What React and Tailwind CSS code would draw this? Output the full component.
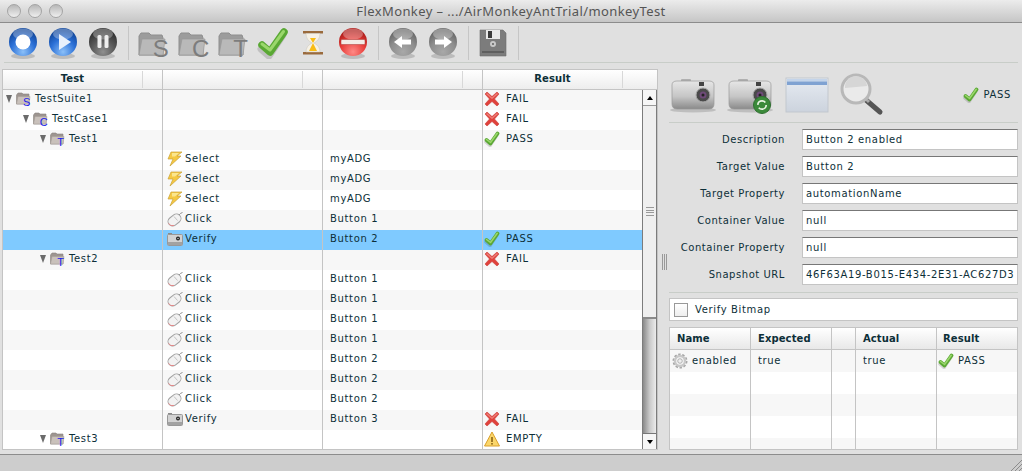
import React from "react";

// Round glossy toolbar button
function Orb({ id, light, mid, dark, children }) {
  return (
    <svg width="32" height="34" viewBox="0 0 32 34">
      <defs>
        <radialGradient id={id} cx="50%" cy="85%" r="75%">
          <stop offset="0%" stopColor={light} />
          <stop offset="60%" stopColor={mid} />
          <stop offset="100%" stopColor={dark} />
        </radialGradient>
      </defs>
      <ellipse cx="16" cy="30" rx="12" ry="3" fill="#000" opacity="0.16" />
      <circle cx="16" cy="16" r="14" fill={`url(#${id})`} />
      <ellipse cx="16" cy="8" rx="10" ry="5.5" fill="#fff" opacity="0.3" />
      {children}
    </svg>
  );
}

function BigFolder({ letter }) {
  return (
    <svg width="34" height="38" viewBox="-1 -4 34 38">
      <path d="M2 8 L4 5 H12 L14 7 H25 L26 10 V27 H2 Z" fill="#9c9c9c" stroke="#8e8e8e" />
      <path d="M2 27 L5 11 H28 L26 27 Z" fill="#b9b9b9" stroke="#9a9a9a" strokeWidth="0.7" />
      <text x="24" y="28.5" textAnchor="middle" fontSize="24" fontFamily="'Liberation Sans', sans-serif" fill="#7d7d7d">{letter}</text>
    </svg>
  );
}

function Check({ size = 16 }) {
  return (
    <svg width={size} height={size} viewBox="0 0 32 32">
      <path d="M5 20 L13 27 L27 6" fill="none" stroke="#000" strokeOpacity="0.14" strokeWidth="7" strokeLinecap="round" strokeLinejoin="round" transform="translate(-1 2)" />
      <path d="M5 18 L13 25 L27 5" fill="none" stroke="#5aa834" strokeWidth="7.5" strokeLinecap="round" strokeLinejoin="round" />
      <path d="M5 17 L13 23 L26.5 4.5" fill="none" stroke="#9bd76c" strokeWidth="3" strokeLinecap="round" strokeLinejoin="round" />
    </svg>
  );
}

function Cross() {
  return (
    <svg width="16" height="16" viewBox="0 0 16 16">
      <path d="M1 3 L3 1 L8 5.5 L13 1 L15 3 L10.5 8 L15 13 L13 15 L8 10.5 L3 15 L1 13 L5.5 8 Z" fill="#e0423c" stroke="#c9403a" strokeWidth="0.6" />
      <path d="M3 2 L8 6.5 L13 2 L14 3 L8 8 L2 3 Z" fill="#f59a94" opacity="0.7" />
    </svg>
  );
}

function Warn() {
  return (
    <svg width="16" height="16" viewBox="0 0 16 16">
      <path d="M8 1 L15.5 15 H0.5 Z" fill="#fbd66a" stroke="#d9a02c" />
      <rect x="7.2" y="6" width="1.6" height="5" fill="#8a6414" />
      <rect x="7.2" y="12" width="1.6" height="1.6" fill="#8a6414" />
    </svg>
  );
}

function Bolt() {
  return (
    <svg width="16" height="16" viewBox="0 0 16 16">
      <path d="M4 1 H15 L10 5 H14 L3 15 L6 8 H1 Z" fill="#f5c843" stroke="#c9a23a" strokeWidth="0.7" />
      <path d="M5 2 H12 L8 5.5 H5 Z" fill="#fbe68d" />
    </svg>
  );
}

function Mouse() {
  return (
    <svg width="16" height="16" viewBox="0 0 16 16">
      <path d="M12 4 Q13.5 2 15.5 1.5" stroke="#8f8f8f" fill="none" />
      <rect x="0.5" y="4.5" width="14" height="9" rx="4.5" transform="rotate(-38 7.5 9)" fill="#f2f2f2" stroke="#a2a2a2" />
      <path d="M1.5 12.5 Q3.5 15.5 7 14.5" stroke="#e58a8a" fill="none" />
      <path d="M7 5.5 L10.5 9.5" stroke="#b5b5b5" strokeWidth="0.8" />
    </svg>
  );
}

function MiniCamera() {
  return (
    <svg width="16" height="16" viewBox="0 0 16 16">
      <rect x="1" y="2" width="4" height="2" fill="#8a8a8a" />
      <rect x="0.5" y="3.5" width="15" height="11" rx="1" fill="#d2d2d2" stroke="#989898" />
      <rect x="1" y="11" width="14" height="3" fill="#a2a2a2" />
      <circle cx="11" cy="7.5" r="2" fill="#222" />
      <circle cx="11" cy="7.5" r="0.7" fill="#ddd" />
    </svg>
  );
}

function TreeFolder({ letter }) {
  return (
    <svg width="17" height="18" viewBox="0 0 17 18">
      <path d="M0.5 5 L2 3 H6 L7 4 H13 V14 H0.5 Z" fill="#9d9590" stroke="#8c8480" strokeWidth="0.6" />
      <path d="M0.5 14 L2 6.5 H14 L13 14 Z" fill="#c9c1bb" stroke="#a39b95" strokeWidth="0.5" />
      <text x="11" y="16" textAnchor="middle" fontSize="11" fontFamily="'Liberation Sans', sans-serif" fill="#2222ee">{letter}</text>
    </svg>
  );
}

function Gear() {
  return (
    <svg width="16" height="16" viewBox="0 0 16 16">
      <circle cx="8" cy="8" r="6" fill="none" stroke="#a5a5a5" strokeWidth="3" strokeDasharray="2.2 1.5" />
      <circle cx="8" cy="8" r="5" fill="none" stroke="#c8c8c8" strokeWidth="2.4" />
      <circle cx="8" cy="8" r="2.3" fill="#eee" stroke="#999" strokeWidth="0.7" />
    </svg>
  );
}

function BigCamera({ badge }) {
  return (
    <svg width="48" height="42" viewBox="0 0 48 42">
      <defs>
        <linearGradient id="camBody" x1="0" y1="0" x2="0" y2="1">
          <stop offset="0%" stopColor="#e6e6e6" />
          <stop offset="55%" stopColor="#c6c6c6" />
          <stop offset="100%" stopColor="#8a8a8a" />
        </linearGradient>
      </defs>
      <ellipse cx="24" cy="36" rx="23" ry="2.5" fill="#000" opacity="0.15" />
      <rect x="12" y="5" width="10" height="4" rx="1" fill="#b0b0b0" />
      <path d="M3 11 Q3 7 8 7 H40 Q45 7 45 11 V30 Q45 35 40 35 H8 Q3 35 3 30 Z" fill="url(#camBody)" stroke="#999" strokeWidth="0.7" />
      <rect x="30" y="8" width="5" height="4" fill="#444" />
      <circle cx="34" cy="21" r="7" fill="#4a4a4a" stroke="#aaa" />
      <circle cx="34" cy="21" r="3.5" fill="#6e4a78" />
      <circle cx="34" cy="21" r="1.5" fill="#222" />
      {badge && (
        <g>
          <circle cx="36" cy="31" r="8.5" fill="#3b8a3a" stroke="#2f6f30" />
          <circle cx="36" cy="31" r="4.2" fill="none" stroke="#e9f4e3" strokeWidth="1.7" strokeDasharray="10 3" />
        </g>
      )}
    </svg>
  );
}

function WindowIcon() {
  return (
    <svg width="44" height="38" viewBox="0 0 44 38">
      <defs>
        <linearGradient id="winBody" x1="0" y1="0" x2="0" y2="1">
          <stop offset="0%" stopColor="#e6ebf2" />
          <stop offset="100%" stopColor="#ccd3dd" />
        </linearGradient>
      </defs>
      <rect x="1" y="2" width="42" height="34" fill="url(#winBody)" stroke="#c2c7ce" />
      <rect x="2" y="3" width="40" height="2.5" fill="#c3d4ea" />
      <rect x="2" y="5.5" width="40" height="3.5" fill="#7fa2d2" />
    </svg>
  );
}

function Magnifier() {
  return (
    <svg width="44" height="44" viewBox="0 0 44 44">
      <path d="M26 27 L40 39" stroke="#555" strokeWidth="5" strokeLinecap="round" />
      <path d="M24 24 L29 29" stroke="#aaa" strokeWidth="3" />
      <circle cx="16" cy="16" r="14" fill="#eaeaea" stroke="#b8b8b8" strokeWidth="3" />
      <path d="M5 15 A11 11 0 0 1 27 13 Z" fill="#d6d6d6" />
    </svg>
  );
}

function ToolSlot({ children }) {
  return <div className="w-[40px] h-[38px] flex items-center justify-center">{children}</div>;
}

function ToolSep() {
  return <div className="w-px h-[34px] bg-[#c6c6c6] ml-[5px] mr-[4px]" />;
}

function Toolbar() {
  return (
    <div className="h-[40px] shrink-0 flex items-center mx-[4px] border-b border-[#c8cdc8]">
      <div className="w-[39px] h-[38px] pr-px flex items-center justify-center">
        <Orb id="orbBlue1" light="#8cc0f8" mid="#2a6fd6" dark="#144a9e">
          <circle cx="16" cy="16" r="7.5" fill="#fff" />
        </Orb>
      </div>
      <ToolSlot>
        <Orb id="orbBlue2" light="#8cc0f8" mid="#2a6fd6" dark="#144a9e">
          <path d="M12 8 L24 16 L12 24 Z" fill="#e8f0fb" />
        </Orb>
      </ToolSlot>
      <ToolSlot>
        <Orb id="orbGrey1" light="#8f8f8f" mid="#555" dark="#333">
          <rect x="10.5" y="9" width="4" height="13" rx="1.5" fill="#eee" />
          <rect x="17.5" y="9" width="4" height="13" rx="1.5" fill="#eee" />
        </Orb>
      </ToolSlot>
      <ToolSep />
      <ToolSlot><BigFolder letter="S" /></ToolSlot>
      <ToolSlot><BigFolder letter="C" /></ToolSlot>
      <ToolSlot><BigFolder letter="T" /></ToolSlot>
      <ToolSlot><Check size={32} /></ToolSlot>
      <ToolSlot>
        <svg width="22" height="26" viewBox="0 0 22 26">
          <rect x="1" y="1" width="20" height="2.5" fill="#9a6a3c" />
          <rect x="1" y="22" width="20" height="2.5" fill="#9a6a3c" />
          <path d="M4 3.5 H18 Q18 10 12 13 Q18 16 18 22 H4 Q4 16 10 13 Q4 10 4 3.5 Z" fill="#f6f1e6" stroke="#c9c4b8" strokeWidth="0.5" />
          <path d="M8 8 H14 L11 13 L15 21 H7 L11 13 Z" fill="#f8bc16" />
        </svg>
      </ToolSlot>
      <ToolSlot>
        <Orb id="orbRed" light="#ff8a86" mid="#e73c38" dark="#b01f1c">
          <rect x="4" y="13.5" width="24" height="5" rx="1" fill="#f3ece6" stroke="#a83a36" strokeWidth="0.5" />
        </Orb>
      </ToolSlot>
      <ToolSep />
      <ToolSlot>
        <Orb id="orbGrey2" light="#a8a8a8" mid="#8e8e8e" dark="#6a6a6a">
          <path d="M7 16 L15 10 V13.5 H24 V18.5 H15 V22 Z" fill="#fff" />
        </Orb>
      </ToolSlot>
      <ToolSlot>
        <Orb id="orbGrey3" light="#a8a8a8" mid="#8e8e8e" dark="#6a6a6a">
          <path d="M25 16 L17 10 V13.5 H8 V18.5 H17 V22 Z" fill="#fff" />
        </Orb>
      </ToolSlot>
      <ToolSep />
      <ToolSlot>
        <svg width="28" height="30" viewBox="0 0 28 30">
          <path d="M1 2 H24 L27 5 V28 H1 Z" fill="#7c7c7c" stroke="#6c6c6c" strokeWidth="0.6" />
          <rect x="7" y="2" width="14" height="9" fill="#e8e8e8" />
          <rect x="9" y="3" width="4" height="7" fill="#3a3a3a" />
          <circle cx="14" cy="16" r="3" fill="#c9c9c9" />
          <circle cx="14" cy="16" r="0.9" fill="#555" />
          <rect x="3" y="23" width="22" height="2" fill="#5f5f5f" />
        </svg>
      </ToolSlot>
      <ToolSep />
    </div>
  );
}

const treeRows = [
  { level: 0, folder: "S", name: "TestSuite1", result: "FAIL" },
  { level: 1, folder: "C", name: "TestCase1", result: "FAIL" },
  { level: 2, folder: "T", name: "Test1", result: "PASS" },
  { action: "Select", target: "myADG" },
  { action: "Select", target: "myADG" },
  { action: "Select", target: "myADG" },
  { action: "Click", target: "Button 1" },
  { action: "Verify", target: "Button 2", result: "PASS", selected: true },
  { level: 2, folder: "T", name: "Test2", result: "FAIL" },
  { action: "Click", target: "Button 1" },
  { action: "Click", target: "Button 1" },
  { action: "Click", target: "Button 1" },
  { action: "Click", target: "Button 1" },
  { action: "Click", target: "Button 2" },
  { action: "Click", target: "Button 2" },
  { action: "Click", target: "Button 2" },
  { action: "Verify", target: "Button 3", result: "FAIL" },
  { level: 2, folder: "T", name: "Test3", result: "EMPTY" },
];

function ActionIcon({ name }) {
  if (name === "Select") return <Bolt />;
  if (name === "Click") return <Mouse />;
  return <MiniCamera />;
}

function ResultIcon({ name }) {
  if (name === "PASS") return <Check />;
  if (name === "FAIL") return <Cross />;
  return <Warn />;
}

function TreeTable() {
  return (
    <div className="w-[656px] h-[381px] border border-[#c4c4c4] bg-white flex flex-col shrink-0 overflow-hidden">
      <div className="h-[20px] shrink-0 flex bg-gradient-to-b from-white to-[#ededed] border-b border-[#c4c4c4] font-bold tracking-[0.1px]">
        <div className="w-[160px] border-r border-[#c4c4c4] flex">
          <div className="w-[140px] border-r border-[#d8d8d8] my-[1px] pb-[2px] flex items-center justify-center">Test</div>
        </div>
        <div className="w-[160px] border-r border-[#c4c4c4] flex">
          <div className="w-[140px] border-r border-[#d8d8d8] my-[1px]" />
        </div>
        <div className="w-[160px] border-r border-[#c4c4c4] flex">
          <div className="w-[140px] border-r border-[#d8d8d8] my-[1px]" />
        </div>
        <div className="w-[140px] border-r border-[#d8d8d8] my-[1px] pb-[2px] flex items-center justify-center">Result</div>
      </div>
      <div className="flex flex-1 min-h-0">
        <div className="w-[639px] shrink-0">
          {treeRows.map((row, i) => {
            let bg = i % 2 === 0 ? "bg-[#f7f7f7]" : "bg-white";
            if (row.selected) bg = "bg-[#7fcaff]";
            return (
              <div key={i} className={`h-[20px] flex ${bg}`}>
                <div className="w-[160px] border-r border-[#c4c4c4] pb-[2px] flex items-center">
                  {row.name && (
                    <div
                      className="flex items-center"
                      style={{ paddingLeft: 3 + row.level * 17 }}
                    >
                      <div className="w-0 h-0 border-l-[3.5px] border-r-[3.5px] border-t-[8px] border-l-transparent border-r-transparent border-t-[#6b6b6b] mr-[4px]" />
                      <TreeFolder letter={row.folder} />
                      <span className="ml-[2px]">{row.name}</span>
                    </div>
                  )}
                </div>
                <div className="w-[160px] border-r border-[#c4c4c4] pb-[2px] flex items-center pl-[4px]">
                  {row.action && (
                    <>
                      <ActionIcon name={row.action} />
                      <span className="ml-[2px]">{row.action}</span>
                    </>
                  )}
                </div>
                <div className="w-[160px] border-r border-[#c4c4c4] pb-[2px] flex items-center pl-[7px]">
                  {row.target}
                </div>
                <div className="flex-1 pb-[2px] flex items-center pl-[1px]">
                  {row.result && (
                    <>
                      <ResultIcon name={row.result} />
                      <span className="ml-[6px]">{row.result}</span>
                    </>
                  )}
                </div>
              </div>
            );
          })}
        </div>
        <div className="w-[15px] shrink-0 flex flex-col border-x border-[#7c7c7c]">
          <div className="h-[16px] shrink-0 bg-[#f6f6f6] border-b border-[#999] flex items-center justify-center">
            <div className="w-0 h-0 border-l-[3.5px] border-r-[3.5px] border-b-[4px] border-l-transparent border-r-transparent border-b-black" />
          </div>
          <div className="h-[213px] shrink-0 bg-[#efefef] border-b-2 border-[#8a8a8a] flex items-center justify-center">
            <div className="w-[8px] h-[9px] flex flex-col justify-between">
              <div className="h-px bg-[#999]" />
              <div className="h-px bg-[#999]" />
              <div className="h-px bg-[#999]" />
              <div className="h-px bg-[#999]" />
            </div>
          </div>
          <div className="flex-1 bg-gradient-to-r from-[#8a8a8a] via-[#c8c8c8] to-[#ececec]" />
          <div className="h-[16px] shrink-0 bg-[#f6f6f6] border-t border-[#777] flex items-center justify-center">
            <div className="w-0 h-0 border-l-[3.5px] border-r-[3.5px] border-t-[4px] border-l-transparent border-r-transparent border-t-black" />
          </div>
        </div>
      </div>
    </div>
  );
}

const fields = [
  ["Description", "Button 2 enabled"],
  ["Target Value", "Button 2"],
  ["Target Property", "automationName"],
  ["Container Value", "null"],
  ["Container Property", "null"],
  ["Snapshot URL", "46F63A19-B015-E434-2E31-AC627D3"],
];

function DetailPanel() {
  return (
    <div className="w-[350px] shrink-0 pl-px">
      <div className="h-[54px] flex items-center border-b border-[#c8cdc8] pb-[2px]">
        <BigCamera />
        <div className="ml-[9px]"><BigCamera badge /></div>
        <div className="ml-[11px]"><WindowIcon /></div>
        <div className="ml-[11px]"><Magnifier /></div>
        <div className="ml-auto flex items-center mr-[7px]">
          <Check />
          <span className="ml-[4px]">PASS</span>
        </div>
      </div>
      <div className="pt-[6px] flex flex-col gap-[6px] h-[170px] border-b border-[#c8cdc8]">
        {fields.map(([label, value]) => (
          <div key={label} className="h-[21px] flex items-center">
            <div className="w-[116px] text-right shrink-0 tracking-[0.55px]">{label}</div>
            <div className="ml-[17px] w-[216px] h-[21px] bg-white border border-[#c4c4c4] border-t-[#777] flex items-center pl-[3px] overflow-hidden whitespace-nowrap">
              {value}
            </div>
          </div>
        ))}
      </div>
      <div className="mt-[5px] h-[23px] border border-[#c4c4c4] bg-white flex items-center pl-[4px]">
        <div className="w-[14px] h-[14px] border border-[#999] bg-gradient-to-b from-white to-[#eee]" />
        <span className="ml-[7px]">Verify Bitmap</span>
      </div>
      <div className="mt-[6px] h-[123px] border border-[#c4c4c4] bg-white flex flex-col overflow-hidden">
        <div className="h-[22px] shrink-0 flex font-bold tracking-[0.1px] bg-gradient-to-b from-white to-[#e8e8e8] border-b border-[#c4c4c4]">
          <div className="w-[81px] border-r border-[#c4c4c4] pl-[7px] flex items-center">Name</div>
          <div className="w-[81px] border-r border-[#c4c4c4] pl-[7px] flex items-center">Expected</div>
          <div className="w-[24px] border-r border-[#c4c4c4]" />
          <div className="w-[81px] border-r border-[#c4c4c4] pl-[7px] flex items-center">Actual</div>
          <div className="flex-1 pl-[6px] flex items-center">Result</div>
        </div>
        {[0, 1, 2, 3, 4].map((i) => (
          <div key={i} className={`h-[22px] shrink-0 flex ${i % 2 === 0 ? "bg-[#f7f7f7]" : "bg-white"}`}>
            <div className="w-[81px] border-r border-[#c4c4c4] pl-[2px] flex items-center">
              {i === 0 && (
                <>
                  <Gear />
                  <span className="ml-[4px]">enabled</span>
                </>
              )}
            </div>
            <div className="w-[81px] border-r border-[#c4c4c4] pl-[7px] flex items-center">{i === 0 && "true"}</div>
            <div className="w-[24px] border-r border-[#c4c4c4]" />
            <div className="w-[81px] border-r border-[#c4c4c4] pl-[7px] flex items-center">{i === 0 && "true"}</div>
            <div className="flex-1 pl-[1px] flex items-center">
              {i === 0 && (
                <>
                  <Check />
                  <span className="ml-[4px]">PASS</span>
                </>
              )}
            </div>
          </div>
        ))}
      </div>
    </div>
  );
}

function App() {
  return (
    <div className="w-[1022px] h-[471px] overflow-hidden bg-[#e0e0e0] flex flex-col text-[10px] leading-none tracking-[0.65px] text-[#0d2f38] font-['DejaVu_Sans',sans-serif]">
      {/* title bar */}
      <div className="h-[23px] shrink-0 grid grid-cols-[1fr_auto_1fr] items-center bg-gradient-to-b from-[#ececec] to-[#c6c6c6] border-b border-[#8c8c8c]">
        <div className="flex gap-[7px] pl-[7px]">
          <div className="w-[14px] h-[14px] rounded-full border border-[#a4a4a4] bg-gradient-to-b from-[#b8b8b8] to-[#efefef]" />
          <div className="w-[14px] h-[14px] rounded-full border border-[#a4a4a4] bg-gradient-to-b from-[#b8b8b8] to-[#efefef]" />
          <div className="w-[14px] h-[14px] rounded-full border border-[#a4a4a4] bg-gradient-to-b from-[#b8b8b8] to-[#efefef]" />
        </div>
        <div className="text-[13px] text-[#555] font-['Noto_Sans',sans-serif] tracking-[0.4px]">
          FlexMonkey – .../AirMonkeyAntTrial/monkeyTest
        </div>
        <div />
      </div>
      <Toolbar />
      {/* main area */}
      <div className="flex-1 min-h-0 flex pl-[2px] pt-[6px]">
        <TreeTable />
        <div className="w-[10px] shrink-0 flex items-center justify-center pl-[3px]">
          <div className="flex gap-[1px]">
            <div className="w-px h-[16px] bg-[#999]" />
            <div className="w-px h-[16px] bg-[#999]" />
            <div className="w-px h-[16px] bg-[#999]" />
          </div>
        </div>
        <DetailPanel />
      </div>
      {/* status bar */}
      <div className="h-[17px] shrink-0 bg-[#cdcdcd] border-t border-[#8c8c8c] flex justify-end items-end">
        <svg width="12" height="12" viewBox="0 0 12 12">
          <path d="M12 1 L1 12 M12 5 L5 12 M12 9 L9 12" stroke="#8c8c8c" />
        </svg>
      </div>
    </div>
  );
}

export default App;
